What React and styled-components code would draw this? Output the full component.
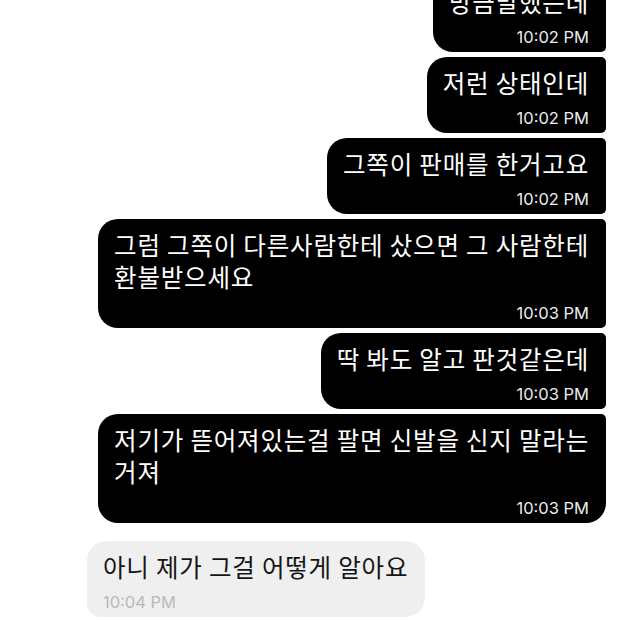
import { createGlobalStyle, styled } from "styled-components";

const GlobalStyle = createGlobalStyle`
  html, body {
    margin: 0;
    padding: 0;
    background: #ffffff;
    overflow: hidden;
  }
  body {
    font-family: "Noto Sans CJK KR", "Noto Sans", sans-serif;
  }
`;

const Screen = styled.div`
  width: 620px;
  height: 620px;
  overflow: hidden;
  background: #ffffff;
`;

// the thread is scrolled, so the first bubble is cut off at the top
const Thread = styled.div`
  display: flex;
  flex-direction: column;
  gap: 5px;
  margin-top: -24px;
  padding: 0 14px 0 0;
`;

const Bubble = styled.div`
  box-sizing: border-box;
  max-width: 520px;
  padding: 10px 17px 5px 16px;
  display: flex;
  flex-direction: column;
  align-self: ${(p) => (p.$mine ? "flex-end" : "flex-start")};
  margin-left: ${(p) => (p.$mine ? "0" : "87px")};
  margin-top: ${(p) => (p.$mine ? "0" : "13px")};
  background: ${(p) => (p.$mine ? "#000000" : "#efefef")};
  color: ${(p) => (p.$mine ? "#ffffff" : "#161616")};
  border-radius: ${(p) =>
    p.$mine
      ? p.$last
        ? "20px 5px 20px 20px"
        : "20px 5px 5px 20px"
      : "20px 20px 20px 14px"};
`;

const Text = styled.div`
  font-size: 24.5px;
  line-height: ${(p) => (p.$multi ? "32px" : "31px")};
  white-space: pre-line;
  letter-spacing: 0.8px;
`;

const Time = styled.div`
  margin-top: 10px;
  font-family: Inter, "Liberation Sans", sans-serif;
  font-size: 16.5px;
  line-height: 20px;
  text-align: ${(p) => (p.$mine ? "right" : "left")};
  color: ${(p) => (p.$mine ? "#ececec" : "#b9b9b9")};
`;

const messages = [
  { mine: true, text: "방금말했는데", time: "10:02 PM" },
  { mine: true, text: "저런 상태인데", time: "10:02 PM" },
  { mine: true, text: "그쪽이 판매를 한거고요", time: "10:02 PM" },
  {
    mine: true,
    text: "그럼 그쪽이 다른사람한테 샀으면 그 사람한테\n환불받으세요",
    time: "10:03 PM",
  },
  { mine: true, text: "딱 봐도 알고 판것같은데", time: "10:03 PM" },
  {
    mine: true,
    last: true,
    text: "저기가 뜯어져있는걸 팔면 신발을 신지 말라는\n거져",
    time: "10:03 PM",
  },
  { mine: false, text: "아니 제가 그걸 어떻게 알아요", time: "10:04 PM" },
];

export default function App() {
  return (
    <Screen>
      <GlobalStyle />
      <Thread>
        {messages.map((m, i) => (
          <Bubble key={i} $mine={m.mine} $last={m.last}>
            <Text $multi={m.text.includes("\n")}>{m.text}</Text>
            <Time $mine={m.mine}>{m.time}</Time>
          </Bubble>
        ))}
      </Thread>
    </Screen>
  );
}
